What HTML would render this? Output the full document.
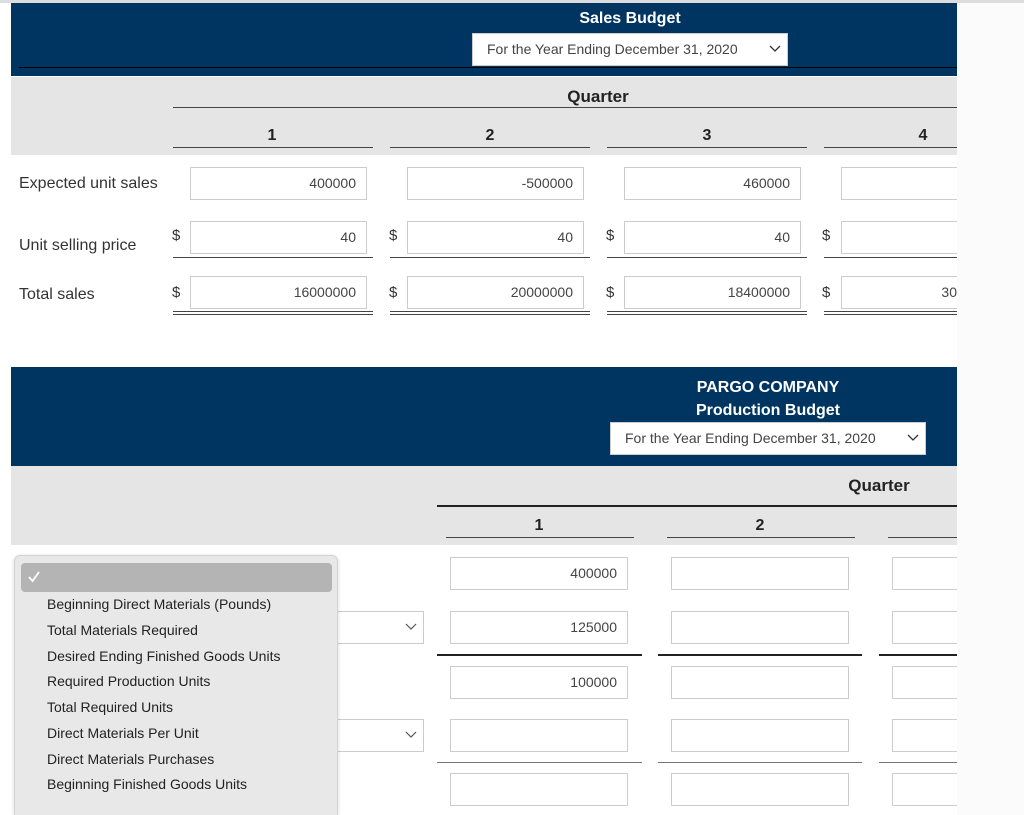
<!DOCTYPE html>
<html><head><style>
*{margin:0;padding:0;box-sizing:border-box}
html,body{width:1024px;height:815px;overflow:hidden}
body{position:relative;background:#fff;font-family:"Liberation Sans",sans-serif;color:#333}
.a{position:absolute}
.blue{background:#003561}
.gray{background:#e5e5e5}
.in{position:absolute;border:1px solid #ccc;background:#fff;height:33px;font-size:14px;color:#444;text-align:right;padding-right:10px;line-height:31px}
.ln{position:absolute;height:1px;background:#444}
.t{position:absolute;font-size:16px;color:#333}
.h{position:absolute;font-weight:bold;font-size:15px;color:#222;transform:translateX(-50%)}
.dol{position:absolute;font-size:15px;color:#333}
.sel{position:absolute;background:#fff;border:1px solid #ccc;font-size:14px;color:#444;line-height:31px;padding-left:14px;height:33px}
.chev{position:absolute;right:6px;top:9px}
.dd div{position:absolute;left:32px;font-size:14px;color:#222}
</style></head><body>
<div class="a" style="left:0;top:0;width:1024px;height:3px;background:#ddd"></div>
<div class="a" style="left:957px;top:3px;width:67px;height:812px;background:#fbfbfb"></div>
<div class="a blue" style="left:11px;top:3px;width:946px;height:73px;overflow:hidden">
<div class="a" style="left:619px;top:-16px;transform:translateX(-50%);color:#fff;font-weight:bold;font-size:16px">PARGO COMPANY</div></div>
<div class="a" style="left:19px;top:67px;width:938px;height:1px;background:#000"></div>
<div class="a" style="left:630px;top:10px;transform:translateX(-50%);color:#fff;font-weight:bold;font-size:16px">Sales Budget</div>
<div class="sel" style="left:472px;top:33px;width:316px">For the Year Ending December 31, 2020<svg class="chev" width="12" height="12"><path d="M1 3l5 5 5-5" stroke="#333" fill="none" stroke-width="1.3"/></svg></div>
<div class="a gray" style="left:11px;top:77px;width:946px;height:78px"></div>
<div class="h" style="left:598px;top:87px;font-size:17px">Quarter</div>
<div class="ln" style="left:173px;top:107px;width:784px"></div>
<div class="h" style="left:272px;top:127px;font-size:16px">1</div><div class="h" style="left:490px;top:127px;font-size:16px">2</div><div class="h" style="left:707px;top:127px;font-size:16px">3</div><div class="h" style="left:923px;top:127px;font-size:16px">4</div>
<div class="ln" style="left:173px;top:147px;width:200px"></div><div class="ln" style="left:390px;top:147px;width:200px"></div><div class="ln" style="left:607px;top:147px;width:200px"></div><div class="ln" style="left:824px;top:147px;width:133px"></div>
<div class="t" style="left:19px;top:175px">Expected unit sales</div>
<div class="t" style="left:19px;top:237px">Unit selling price</div>
<div class="t" style="left:19px;top:286px">Total sales</div>
<div class="in" style="left:190px;top:167px;width:177px">400000</div><div class="in" style="left:407px;top:167px;width:177px">-500000</div><div class="in" style="left:624px;top:167px;width:177px">460000</div><div class="in" style="left:841px;top:167px;width:116px;border-right:none"></div>
<div class="in" style="left:190px;top:221px;width:177px">40</div><div class="in" style="left:407px;top:221px;width:177px">40</div><div class="in" style="left:624px;top:221px;width:177px">40</div><div class="in" style="left:841px;top:221px;width:116px;border-right:none"></div>
<div class="in" style="left:190px;top:276px;width:177px">16000000</div><div class="in" style="left:407px;top:276px;width:177px">20000000</div><div class="in" style="left:624px;top:276px;width:177px">18400000</div><div class="in" style="left:841px;top:276px;width:116px;border-right:none;padding-right:0">30</div>
<div class="dol" style="left:172px;top:227px">$</div><div class="dol" style="left:389px;top:227px">$</div><div class="dol" style="left:606px;top:227px">$</div><div class="dol" style="left:822px;top:227px">$</div>
<div class="dol" style="left:172px;top:284px">$</div><div class="dol" style="left:389px;top:284px">$</div><div class="dol" style="left:606px;top:284px">$</div><div class="dol" style="left:822px;top:284px">$</div>
<div class="ln" style="left:173px;top:257px;width:200px"></div><div class="ln" style="left:390px;top:257px;width:200px"></div><div class="ln" style="left:607px;top:257px;width:200px"></div><div class="ln" style="left:824px;top:257px;width:133px"></div>
<div class="ln" style="left:173px;top:311px;width:200px"></div><div class="ln" style="left:390px;top:311px;width:200px"></div><div class="ln" style="left:607px;top:311px;width:200px"></div><div class="ln" style="left:824px;top:311px;width:133px"></div>
<div class="ln" style="left:173px;top:314px;width:200px"></div><div class="ln" style="left:390px;top:314px;width:200px"></div><div class="ln" style="left:607px;top:314px;width:200px"></div><div class="ln" style="left:824px;top:314px;width:133px"></div>

<div class="a blue" style="left:11px;top:367px;width:946px;height:99px"></div>
<div class="a" style="left:768px;top:376px;transform:translateX(-50%);color:#fff;font-weight:bold;font-size:16px;text-align:center;line-height:23px;white-space:nowrap">PARGO COMPANY<br>Production Budget</div>
<div class="sel" style="left:610px;top:422px;width:316px">For the Year Ending December 31, 2020<svg class="chev" width="12" height="12"><path d="M1 3l5 5 5-5" stroke="#333" fill="none" stroke-width="1.3"/></svg></div>
<div class="a gray" style="left:11px;top:466px;width:946px;height:79px"></div>
<div class="h" style="left:879px;top:476px;font-size:17px">Quarter</div>
<div class="ln" style="left:437px;top:505px;width:520px;height:2px;background:#222"></div>
<div class="h" style="left:539px;top:517px;font-size:16px">1</div><div class="h" style="left:760px;top:517px;font-size:16px">2</div>
<div class="ln" style="left:446px;top:537px;width:188px"></div><div class="ln" style="left:667px;top:537px;width:188px"></div><div class="ln" style="left:888px;top:537px;width:69px"></div>

<div class="in" style="left:450px;top:557px;width:178px">400000</div><div class="in" style="left:671px;top:557px;width:178px"></div><div class="in" style="left:892px;top:557px;width:65px;border-right:none"></div>
<div class="in" style="left:450px;top:611px;width:178px">125000</div><div class="in" style="left:671px;top:611px;width:178px"></div><div class="in" style="left:892px;top:611px;width:65px;border-right:none"></div>
<div class="in" style="left:450px;top:666px;width:178px">100000</div><div class="in" style="left:671px;top:666px;width:178px"></div><div class="in" style="left:892px;top:666px;width:65px;border-right:none"></div>
<div class="in" style="left:450px;top:719px;width:178px"></div><div class="in" style="left:671px;top:719px;width:178px"></div><div class="in" style="left:892px;top:719px;width:65px;border-right:none"></div>
<div class="in" style="left:450px;top:773px;width:178px"></div><div class="in" style="left:671px;top:773px;width:178px"></div><div class="in" style="left:892px;top:773px;width:65px;border-right:none"></div>
<div class="ln" style="left:437px;top:654px;width:205px;height:2px;background:#222"></div><div class="ln" style="left:658px;top:654px;width:204px;height:2px;background:#222"></div><div class="ln" style="left:879px;top:654px;width:78px;height:2px;background:#222"></div>
<div class="ln" style="left:437px;top:762px;width:205px;background:#777"></div><div class="ln" style="left:658px;top:762px;width:204px;background:#777"></div><div class="ln" style="left:879px;top:762px;width:78px;background:#777"></div>
<div class="in" style="left:300px;top:611px;width:124px;border-left:none"><svg class="chev" width="12" height="12"><path d="M1 3l5 5 5-5" stroke="#555" fill="none" stroke-width="1.2"/></svg></div>
<div class="in" style="left:300px;top:719px;width:124px;border-left:none"><svg class="chev" width="12" height="12"><path d="M1 3l5 5 5-5" stroke="#555" fill="none" stroke-width="1.2"/></svg></div>

<div class="a dd" style="left:14px;top:555px;width:324px;height:260px;background:#e8e8e8;border:1px solid #d4d4d4;border-bottom:none;border-radius:6px 6px 0 0;box-shadow:0 1px 4px rgba(0,0,0,.15)">
<div class="a" style="left:6px;top:7px;width:311px;height:29px;background:#b4b4b4;border-radius:4px"></div>
<svg class="a" style="left:12px;top:14px" width="14" height="14"><path d="M2 7l3.5 4L12 2" stroke="#fff" fill="none" stroke-width="1.8"/></svg>
<div style="top:40px">Beginning Direct Materials (Pounds)</div>
<div style="top:66px">Total Materials Required</div>
<div style="top:92px">Desired Ending Finished Goods Units</div>
<div style="top:117px">Required Production Units</div>
<div style="top:143px">Total Required Units</div>
<div style="top:169px">Direct Materials Per Unit</div>
<div style="top:195px">Direct Materials Purchases</div>
<div style="top:220px">Beginning Finished Goods Units</div>
</div>
</body></html>
